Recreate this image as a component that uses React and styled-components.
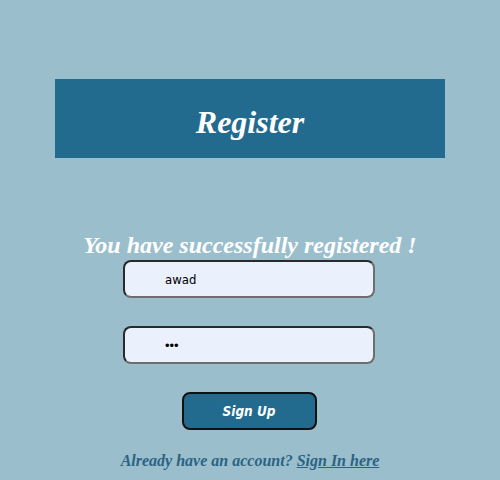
import React from "react";
import styled, { createGlobalStyle } from "styled-components";

const Global = createGlobalStyle`
  html, body { margin: 0; padding: 0; background: #9bbecd; }
  body { font-family: "Liberation Serif", serif; }
`;

const Page = styled.div`
  width: 500px;
  height: 480px;
  box-sizing: border-box;
  padding-top: 79px;
  display: flex;
  flex-direction: column;
  align-items: center;
  overflow: hidden;
`;

const Header = styled.div`
  width: 390px;
  height: 79px;
  box-sizing: border-box;
  padding-top: 25px;
  background: #226b8e;
  text-align: center;
`;

const Title = styled.h1`
  margin: 0;
  font: italic bold 32px "Liberation Serif", serif;
  color: #ffffff;
`;

const Message = styled.p`
  margin: 74px 0 2px;
  font: italic bold 24px/26px "Liberation Serif", serif;
  color: #ffffff;
  text-align: center;
`;

const Form = styled.form`
  display: flex;
  flex-direction: column;
  align-items: center;
  gap: 28px;
  margin-right: 2px;
`;

const Input = styled.input`
  width: 252px;
  height: 38px;
  box-sizing: border-box;
  padding: 0 0 0 40px;
  border: 2px solid;
  border-color: #2a2a2a #6e6e6e #6e6e6e #2a2a2a;
  border-radius: 8px;
  background: #ebf1fc;
  font-size: 13px;
  font-family: ${(p) =>
    p.type === "password"
      ? `"Liberation Sans", sans-serif`
      : `"DejaVu Sans Condensed", "DejaVu Sans", sans-serif`};
  color: #000;
  outline: none;
`;

const Button = styled.button`
  width: 135px;
  height: 38px;
  box-sizing: border-box;
  border: 2px solid #111;
  border-radius: 8px;
  background: #226b8e;
  color: #fff;
  font: italic bold 13.5px "DejaVu Sans Condensed", "DejaVu Sans", sans-serif;
  cursor: pointer;
`;

const Footer = styled.p`
  margin: 22px 0 0;
  font: italic bold 16px "Liberation Serif", serif;
  color: #2a6383;
  text-align: center;
`;

const Link = styled.a`
  color: #2a6383;
  text-decoration: underline;
`;

export default function App() {
  return (
    <>
      <Global />
      <Page>
        <Header>
          <Title>Register</Title>
        </Header>
        <Message>You have successfully registered !</Message>
        <Form onSubmit={(e) => e.preventDefault()}>
          <Input type="text" defaultValue="awad" />
          <Input type="password" defaultValue="abc" />
          <Button type="submit">Sign Up</Button>
        </Form>
        <Footer>
          Already have an account? <Link href="#">Sign In here</Link>
        </Footer>
      </Page>
    </>
  );
}
